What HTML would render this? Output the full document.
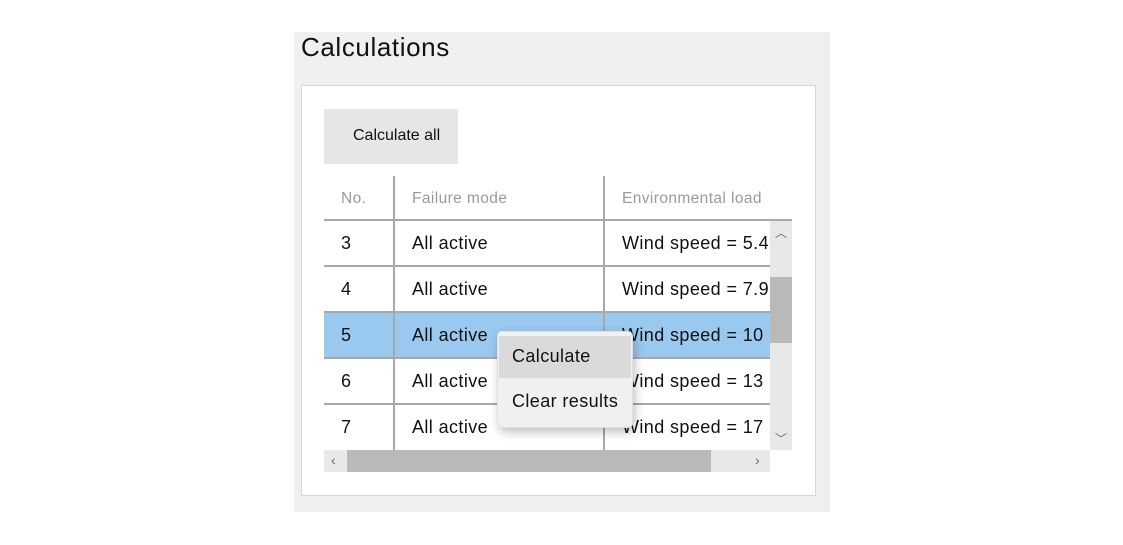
<!DOCTYPE html>
<html><head><style>
body{margin:0;width:1123px;height:545px;background:#fff;font-family:"Segoe UI","Liberation Sans",sans-serif;position:relative;overflow:hidden}
div{position:absolute;box-sizing:border-box}
.t{white-space:nowrap;color:#111;font-size:18px;letter-spacing:0.4px}
.h{color:#9a9a9a;font-size:15.5px;white-space:nowrap;letter-spacing:0.4px}
</style></head><body>
<div style="left:294px;top:32px;width:536px;height:480px;background:#f0f0f0"></div>
<div class="t" style="left:301px;top:32px;font-size:26px;color:#111;letter-spacing:0.6px">Calculations</div>
<div style="left:301px;top:85px;width:515px;height:411px;background:#fff;border:1px solid #d6d6d6"></div>
<div style="left:324px;top:109px;width:134px;height:55px;background:#e6e6e6"></div>
<div class="t" style="left:353px;top:127px;font-size:16px;letter-spacing:0">Calculate all</div>
<div class="h" style="left:341px;top:190px">No.</div>
<div class="h" style="left:412px;top:190px">Failure mode</div>
<div class="h" style="left:622px;top:190px">Environmental load</div>
<div style="left:324px;top:312px;width:446px;height:46px;background:#99c9ef"></div>
<div style="left:324px;top:219px;width:468px;height:2px;background:#a8a8a8"></div>
<div style="left:324px;top:265px;width:446px;height:2px;background:#a8a8a8"></div>
<div style="left:324px;top:311px;width:446px;height:2px;background:#a8a8a8"></div>
<div style="left:324px;top:357px;width:446px;height:2px;background:#a8a8a8"></div>
<div style="left:324px;top:403px;width:446px;height:2px;background:#a8a8a8"></div>
<div style="left:393px;top:176px;width:2px;height:274px;background:#a8a8a8"></div>
<div style="left:603px;top:176px;width:2px;height:274px;background:#a8a8a8"></div>
<div style="left:770px;top:221px;width:22px;height:229px;background:#e8e8e8"></div>
<div style="left:770px;top:277px;width:22px;height:66px;background:#b9b9b9"></div>
<div style="left:775px;top:224px;font-size:12px;color:#666">︿</div>
<div style="left:775px;top:430px;font-size:12px;color:#666">﹀</div>
<div style="left:324px;top:450px;width:446px;height:22px;background:#e8e8e8"></div>
<div style="left:347px;top:450px;width:364px;height:22px;background:#b9b9b9"></div>
<div style="left:331px;top:452px;font-size:14px;color:#666">‹</div>
<div style="left:755px;top:452px;font-size:14px;color:#666">›</div>
<div style="left:324px;top:221px;width:446px;height:229px;overflow:hidden">
<div class="t" style="left:17px;top:12px">3</div><div class="t" style="left:88px;top:12px">All active</div><div class="t" style="left:298px;top:12px">Wind speed = 5.4</div>
<div class="t" style="left:17px;top:58px">4</div><div class="t" style="left:88px;top:58px">All active</div><div class="t" style="left:298px;top:58px">Wind speed = 7.9</div>
<div class="t" style="left:17px;top:104px">5</div><div class="t" style="left:88px;top:104px">All active</div><div class="t" style="left:298px;top:104px">Wind speed = 10</div>
<div class="t" style="left:17px;top:150px">6</div><div class="t" style="left:88px;top:150px">All active</div><div class="t" style="left:298px;top:150px">Wind speed = 13</div>
<div class="t" style="left:17px;top:196px">7</div><div class="t" style="left:88px;top:196px">All active</div><div class="t" style="left:298px;top:196px">Wind speed = 17</div>
</div>
<div style="left:497px;top:331px;width:136px;height:97px;background:#f0f0f0;border-radius:5px;box-shadow:2px 4px 10px rgba(0,0,0,.25);border:1px solid #e0e0e0"></div>
<div style="left:499px;top:336px;width:132px;height:42px;background:#dadada"></div>
<div class="t" style="left:512px;top:346px">Calculate</div>
<div class="t" style="left:512px;top:391px">Clear results</div>
</body></html>
